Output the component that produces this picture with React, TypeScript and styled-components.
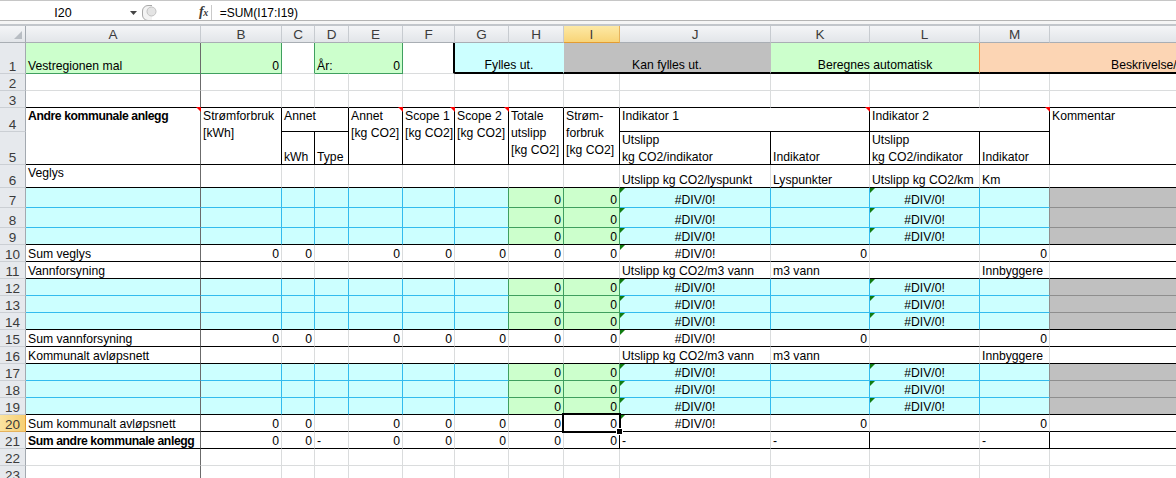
import React from 'react';
import styled, { createGlobalStyle, css } from 'styled-components';

const GlobalStyle = createGlobalStyle`
  html, body { margin: 0; padding: 0; background: #ffffff; overflow: hidden; }
  body { font-family: "Liberation Sans", Arial, sans-serif; color: #000; }
`;

const FILL = { cyan: '#ccffff', green: '#ccffcc', gray: '#c0c0c0', peach: '#fcd5b4' };
const LINE = {
  grid: '#dadcdd',
  dark: '#6b6b6b',
  black: '#000000',
  cyan: '#33bbee',
  green: '#3f9f5f',
  gray: '#8e8e8e',
  orange: '#f79646',
};

const COL_W = [175, 81, 33, 34, 54, 52, 54, 55, 56, 151, 99, 110, 70, 340];
const ROW_H = [31, 17, 17, 24, 33, 23, 20, 20, ...Array(15).fill(17)];
const LETTERS = 'ABCDEFGHIJKLMN'.split('');

type Spec = {
  t?: string;
  span?: number;
  rows?: number;
  bg?: string;
  r?: string;
  rw?: number;
  b?: string;
  bw?: number;
  al?: 'left' | 'right' | 'center';
  top?: boolean;
  bold?: boolean;
  note?: 'red' | 'green';
  sel?: boolean;
  pl?: number;
};

const rep = (n: number, s: Spec): Spec[] => Array.from({ length: n }, () => ({ ...s }));
const B = LINE.black;
const Z: Spec = { t: '0', al: 'right', b: B };

const row1: Spec[] = [
  { t: 'Vestregionen mal', bg: FILL.green, r: LINE.dark, b: LINE.green },
  { t: '0', al: 'right', bg: FILL.green, r: LINE.green, b: LINE.green },
  { r: LINE.green },
  { t: 'År:', bg: FILL.green, r: FILL.green, b: LINE.green },
  { t: '0', al: 'right', bg: FILL.green, r: LINE.green, b: LINE.green },
  { r: B, rw: 2 },
  { t: 'Fylles ut.', span: 2, al: 'center', bg: FILL.cyan, r: FILL.cyan, b: B, bw: 2 },
  { t: 'Kan fylles ut.', span: 2, al: 'center', bg: FILL.gray, r: FILL.gray, b: B, bw: 2 },
  { t: 'Beregnes automatisk', span: 2, al: 'center', bg: FILL.green, r: LINE.orange, b: B, bw: 2 },
  { t: 'Beskrivelse/kommentar', span: 2, bg: FILL.peach, r: FILL.peach, b: B, bw: 2, pl: 131 },
];

const plainRow = (bottom?: string): Spec[] => [
  { r: LINE.dark, b: bottom },
  ...rep(13, { b: bottom }),
];

const row4: Spec[] = [
  { t: 'Andre kommunale anlegg', rows: 2, top: true, bold: true, r: LINE.dark, b: B, note: 'red' },
  { t: 'Strømforbruk\n[kWh]', rows: 2, top: true, r: B, b: B },
  { t: 'Annet', span: 2, top: true, r: B, b: B },
  { t: 'Annet\n[kg CO2]', rows: 2, top: true, r: B, b: B, note: 'red' },
  { t: 'Scope 1\n[kg CO2]', rows: 2, top: true, r: B, b: B, note: 'red' },
  { t: 'Scope 2\n[kg CO2]', rows: 2, top: true, r: B, b: B, note: 'red' },
  { t: 'Totale\nutslipp\n[kg CO2]', rows: 2, top: true, r: B, b: B },
  { t: 'Strøm-\nforbruk\n[kg CO2]', rows: 2, top: true, r: B, b: B },
  { t: 'Indikator 1', span: 2, top: true, r: B, b: B, note: 'red' },
  { t: 'Indikator 2', span: 2, top: true, r: B, b: B, note: 'red' },
  { t: 'Kommentar', rows: 2, top: true, b: B },
];

const row5: Spec[] = [
  { t: 'kWh', r: B, b: B },
  { t: 'Type', r: B, b: B },
  { t: 'Utslipp\nkg CO2/indikator', r: B, b: B },
  { t: 'Indikator', r: B, b: B },
  { t: 'Utslipp\nkg CO2/indikator', r: B, b: B },
  { t: 'Indikator', r: B, b: B },
];

const headingRow = (label: string, ind: string[], top = false): Spec[] => [
  { t: label, top, r: LINE.dark, b: B },
  ...rep(8, { b: B }),
  ...ind.map((t) => ({ t: t || undefined, b: B })),
  { b: B },
];

const inputRow = (last = false): Spec[] => {
  const bot = (c: string) => (last ? B : c);
  return [
    { bg: FILL.cyan, r: LINE.dark, b: bot(LINE.cyan) },
    ...rep(5, { bg: FILL.cyan, r: LINE.cyan, b: bot(LINE.cyan) }),
    { bg: FILL.cyan, r: LINE.green, b: bot(LINE.cyan) },
    { t: '0', al: 'right', bg: FILL.green, r: LINE.green, b: bot(LINE.green) },
    { t: '0', al: 'right', bg: FILL.green, r: LINE.green, b: bot(LINE.green) },
    { t: '#DIV/0!', al: 'center', note: 'green', bg: FILL.cyan, r: LINE.cyan, b: bot(LINE.cyan) },
    { bg: FILL.cyan, r: LINE.cyan, b: bot(LINE.cyan) },
    { t: '#DIV/0!', al: 'center', note: 'green', bg: FILL.cyan, r: LINE.cyan, b: bot(LINE.cyan) },
    { bg: FILL.cyan, r: LINE.gray, b: bot(LINE.cyan) },
    { bg: FILL.gray, r: LINE.gray, b: bot(LINE.gray) },
  ];
};

const sumRow = (label: string, sel = false): Spec[] => [
  { t: label, r: LINE.dark, b: B },
  { ...Z },
  { ...Z },
  { b: B },
  ...rep(4, Z),
  { ...Z, sel },
  { t: '#DIV/0!', al: 'center', note: 'green', b: B },
  { ...Z },
  { b: B },
  { ...Z },
  { b: B },
];

const totalRow: Spec[] = [
  { t: 'Sum andre kommunale anlegg', bold: true, r: LINE.dark, b: B },
  { ...Z },
  { ...Z },
  { t: '-', b: B },
  ...rep(4, Z),
  { ...Z, r: B },
  { t: '-', b: B },
  { t: '-', r: B, b: B },
  { b: B },
  { t: '-', r: B, b: B },
  { b: B },
];

const ROWS: Spec[][] = [
  row1,
  plainRow(),
  plainRow(B),
  row4,
  row5,
  headingRow('Veglys', ['Utslipp kg CO2/lyspunkt', 'Lyspunkter', 'Utslipp kg CO2/km', 'Km'], true),
  inputRow(),
  inputRow(),
  inputRow(true),
  sumRow('Sum veglys'),
  headingRow('Vannforsyning', ['Utslipp kg CO2/m3 vann', 'm3 vann', '', 'Innbyggere']),
  inputRow(),
  inputRow(),
  inputRow(true),
  sumRow('Sum vannforsyning'),
  headingRow('Kommunalt avløpsnett', ['Utslipp kg CO2/m3 vann', 'm3 vann', '', 'Innbyggere']),
  inputRow(),
  inputRow(),
  inputRow(true),
  sumRow('Sum kommunalt avløpsnett', true),
  totalRow,
  plainRow(),
  plainRow(),
];

/* ---------- window chrome ---------- */

const Page = styled.div`
  width: 1176px;
  height: 478px;
  overflow: hidden;
  display: flex;
  flex-direction: column;
  background: #fff;
`;

const TopBar = styled.div`
  display: flex;
  align-items: center;
  box-sizing: border-box;
  height: 20px;
  padding-top: 4px;
  border-top: 1px solid #c6c6c6;
  background: #fff;
  flex: none;
`;

const NameBox = styled.div`
  width: 126px;
  text-align: center;
  font-size: 12.5px;
  line-height: 14px;
  color: #000;
`;

const DropArrow = styled.svg`
  margin-left: 4px;
  flex: none;
`;

const Handle = styled.svg`
  margin-left: 5px;
  flex: none;
`;

const FxLabel = styled.span`
  margin-left: 41px;
  font-family: "Liberation Serif", "DejaVu Serif", serif;
  font-style: italic;
  font-weight: bold;
  font-size: 14px;
  line-height: 14px;
  color: #3a3a3a;
  letter-spacing: -0.5px;
`;

const FxSub = styled.span`
  font-size: 10px;
`;

const Divider = styled.div`
  margin-left: 3px;
  width: 1px;
  height: 16px;
  background: #c9c9c9;
  flex: none;
`;

const FormulaText = styled.div`
  margin-left: 8px;
  font-size: 12px;
  line-height: 14px;
  color: #000;
`;

const Splitter = styled.div`
  box-sizing: border-box;
  height: 6px;
  flex: none;
  border-top: 1px solid #b4b4b4;
  border-bottom: 2px solid #c2c6cb;
  background: #f5f5f5;
`;

/* ---------- sheet grid ---------- */

const Sheet = styled.div`
  display: grid;
  grid-template-columns: 26px ${COL_W.map((w) => `${w}px`).join(' ')};
  grid-template-rows: 17px ${ROW_H.map((h) => `${h}px`).join(' ')};
  flex: none;
`;

const headBg = 'linear-gradient(#f4f5f7, #e2e5e9)';

const Corner = styled.div`
  position: relative;
  box-sizing: border-box;
  background: ${headBg};
  border-right: 1px solid #a3a9b0;
  border-bottom: 1px solid #a9aeb4;
  &::after {
    content: '';
    position: absolute;
    right: 3px;
    bottom: 3px;
    border-left: 8px solid transparent;
    border-bottom: 8px solid #b8bdc3;
  }
`;

const ColHead = styled.div<{ $active?: boolean }>`
  box-sizing: border-box;
  display: flex;
  align-items: center;
  justify-content: center;
  font-size: 13.5px;
  color: #3b3b3b;
  background: ${headBg};
  border-right: 1px solid #c7cbd0;
  border-bottom: 1px solid #a9aeb4;
  ${(p) =>
    p.$active &&
    css`
      background: linear-gradient(#fde9a6, #f8d477);
      border-right-color: #e6b25c;
      border-bottom-color: #e39c32;
    `}
`;

const RowHead = styled.div<{ $active?: boolean }>`
  grid-column: 1;
  box-sizing: border-box;
  display: flex;
  flex-direction: column;
  justify-content: flex-end;
  align-items: center;
  font-size: 13.5px;
  color: #3b3b3b;
  background: #e6e9ed;
  border-right: 1px solid #a3a9b0;
  border-bottom: 1px solid #cbcfd4;
  ${(p) =>
    p.$active &&
    css`
      background: linear-gradient(90deg, #fbe3a0, #f6cf74);
      border-right-color: #e39c32;
      border-bottom-color: #e6b25c;
    `}
`;

const RowNum = styled.span`
  line-height: 17px;
  margin-bottom: -2px;
`;

type CellProps = {
  $span: number;
  $rows: number;
  $bg: string;
  $r: string;
  $rw: number;
  $b: string;
  $bw: number;
  $al: string;
  $top: boolean;
  $bold: boolean;
  $note?: 'red' | 'green';
  $pl: number;
};

const Cell = styled.div<CellProps>`
  position: relative;
  box-sizing: border-box;
  min-width: 0;
  grid-column: span ${(p) => p.$span};
  grid-row: span ${(p) => p.$rows};
  background: ${(p) => p.$bg};
  border-right: ${(p) => p.$rw}px solid ${(p) => p.$r};
  border-bottom: ${(p) => p.$bw}px solid ${(p) => p.$b};
  display: flex;
  flex-direction: column;
  justify-content: ${(p) => (p.$top ? 'flex-start' : 'flex-end')};
  padding: 0 2px 0 ${(p) => p.$pl}px;
  font-size: 12.2px;
  font-weight: ${(p) => (p.$bold ? 700 : 400)};
  letter-spacing: ${(p) => (p.$bold ? '-0.4px' : '0')};
  text-align: ${(p) => p.$al};
  white-space: pre;
  color: #000;
  ${(p) =>
    p.$note === 'red' &&
    css`
      &::before {
        content: '';
        position: absolute;
        top: -1px;
        right: -1px;
        z-index: 1;
        border-top: 5px solid #ff0000;
        border-left: 5px solid transparent;
      }
    `}
  ${(p) =>
    p.$note === 'green' &&
    css`
      &::before {
        content: '';
        position: absolute;
        top: 0;
        left: 0;
        z-index: 1;
        border-top: 5px solid #107c10;
        border-right: 5px solid transparent;
      }
    `}
`;

const CellText = styled.span<{ $top: boolean }>`
  display: block;
  line-height: 17px;
  margin-bottom: ${(p) => (p.$top ? 0 : -2)}px;
`;

const Selection = styled.span`
  position: absolute;
  top: -2px;
  left: -2px;
  right: -2px;
  bottom: -2px;
  z-index: 3;
  box-sizing: border-box;
  border: 2px solid #000;
  pointer-events: none;
  &::after {
    content: '';
    position: absolute;
    right: -4px;
    bottom: -4px;
    width: 5px;
    height: 5px;
    background: #000;
    border: 1px solid #fff;
  }
`;

const SheetCell: React.FC<{ s: Spec }> = ({ s }) => (
  <Cell
    $span={s.span ?? 1}
    $rows={s.rows ?? 1}
    $bg={s.bg ?? 'transparent'}
    $r={s.r ?? LINE.grid}
    $rw={s.rw ?? 1}
    $b={s.b ?? LINE.grid}
    $bw={s.bw ?? 1}
    $al={s.al ?? 'left'}
    $top={!!s.top}
    $bold={!!s.bold}
    $note={s.note}
    $pl={s.pl ?? 2}
  >
    {s.t && <CellText $top={!!s.top}>{s.t}</CellText>}
    {s.sel && <Selection />}
  </Cell>
);

export default function App() {
  return (
    <>
      <GlobalStyle />
      <Page>
        <TopBar>
          <NameBox>I20</NameBox>
          <DropArrow width="7" height="4" viewBox="0 0 7 4">
            <path d="M0 0H7L3.5 4Z" fill="#444" />
          </DropArrow>
          <Handle width="16" height="16" viewBox="0 0 16 16">
            <path
              d="M10 0.5H6A5.5 5.5 0 0 0 0.5 6V10A5.5 5.5 0 0 0 6 15.5H10"
              fill="#f3f3f3"
              stroke="#a8a8a8"
            />
            <circle cx="9.5" cy="6.5" r="4.5" fill="#e4e4e4" stroke="#c2c2c2" />
          </Handle>
          <FxLabel>
            f<FxSub>x</FxSub>
          </FxLabel>
          <Divider />
          <FormulaText>=SUM(I17:I19)</FormulaText>
        </TopBar>
        <Splitter />
        <Sheet>
          <Corner />
          {LETTERS.map((l) => (
            <ColHead key={l} $active={l === 'I'}>
              {l}
            </ColHead>
          ))}
          {ROWS.map((cells, i) => (
            <React.Fragment key={i}>
              <RowHead $active={i + 1 === 20}>
                <RowNum>{i + 1}</RowNum>
              </RowHead>
              {cells.map((s, j) => (
                <SheetCell key={j} s={s} />
              ))}
            </React.Fragment>
          ))}
        </Sheet>
      </Page>
    </>
  );
}
